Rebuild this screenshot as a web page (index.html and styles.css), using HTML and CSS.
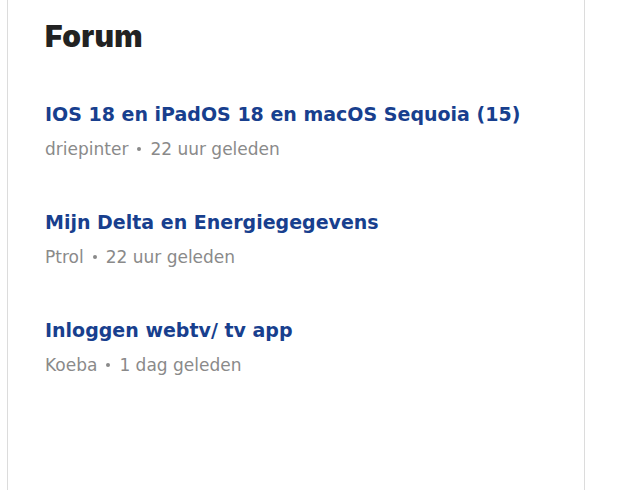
FILE: index.html
```html
<!DOCTYPE html>
<html lang="nl">
<head>
    <meta charset="UTF-8">
    <title>Forum</title>
    <link rel="stylesheet" href="styles.css">
</head>
<body>

    <div class="card">

        <h2 class="card-title">Forum</h2>

        <ul class="topics">
            <li class="topic">
                <a class="topic-title" href="#">IOS 18 en iPadOS 18 en macOS Sequoia (15)</a>
                <div class="topic-meta">driepinter<span class="dot"></span>22 uur geleden</div>
            </li>
            <li class="topic">
                <a class="topic-title" href="#">Mijn Delta en Energiegegevens</a>
                <div class="topic-meta">Ptrol<span class="dot"></span>22 uur geleden</div>
            </li>
            <li class="topic">
                <a class="topic-title" href="#">Inloggen webtv/ tv app</a>
                <div class="topic-meta">Koeba<span class="dot"></span>1 dag geleden</div>
            </li>
        </ul>

    </div>

</body>
</html>
```

FILE: styles.css
```css
* {
    margin: 0px;
    padding: 0px;
    box-sizing: border-box;
}

html, body {
    height: 100%;
    background-color: #ffffff;
}

body {
    font-family: "DejaVu Sans", sans-serif;
    padding-left: 7px;
    overflow: hidden;
}

.card {
    width: 578px;
    min-height: 100%;
    border-left: 1px solid #dcdcdc;
    border-right: 1px solid #dcdcdc;
    padding: 16px 37px 0px 37px;
}

.card-title {
    font-family: "Inter", sans-serif;
    font-size: 30px;
    font-weight: 900;
    letter-spacing: 0.3px;
    color: #222222;
    line-height: 40px;
    margin-bottom: 44px;
}

.topics {
    list-style: none;
}

.topic {
    margin-bottom: 47px;
}

.topic-title {
    display: block;
    font-size: 19px;
    font-weight: 700;
    color: #183f8e;
    text-decoration: none;
    line-height: 28px;
}

.topic-meta {
    margin-top: 9px;
    font-size: 17px;
    color: #8a8a8a;
    line-height: 24px;
}

.dot {
    display: inline-block;
    width: 4px;
    height: 4px;
    border-radius: 50%;
    background-color: #8a8a8a;
    margin: 0px 9px;
    vertical-align: 4px;
}
```
